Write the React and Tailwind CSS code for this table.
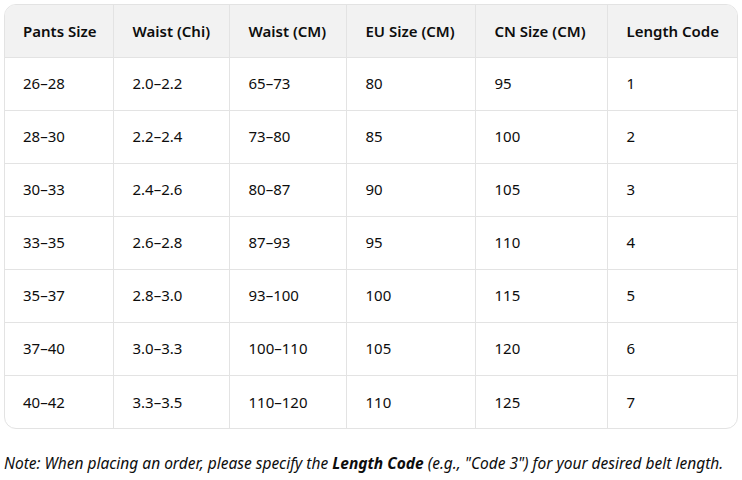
import React from "react";

const headers = ["Pants Size", "Waist (Chi)", "Waist (CM)", "EU Size (CM)", "CN Size (CM)", "Length Code"];
const rows = [
  ["26–28", "2.0–2.2", "65–73", "80", "95", "1"],
  ["28–30", "2.2–2.4", "73–80", "85", "100", "2"],
  ["30–33", "2.4–2.6", "80–87", "90", "105", "3"],
  ["33–35", "2.6–2.8", "87–93", "95", "110", "4"],
  ["35–37", "2.8–3.0", "93–100", "100", "115", "5"],
  ["37–40", "3.0–3.3", "100–110", "105", "120", "6"],
  ["40–42", "3.3–3.5", "110–120", "110", "125", "7"],
];
const widths = ["w-[108px]", "w-[116px]", "w-[117px]", "w-[129px]", "w-[132px]", "w-[130px]"];

export default function App() {
  return (
    <div className="bg-white p-1 text-[#0d0d0d] font-['Noto_Sans',sans-serif]" style={{ width: 742, height: 480 }}>
      <div className="w-[734px] border border-[#e3e3e3] rounded-xl overflow-hidden">
        <table className="w-full border-collapse table-fixed text-[15px]">
          <colgroup>
            {widths.map((w, i) => (
              <col key={i} className={w} />
            ))}
          </colgroup>
          <thead>
            <tr className="bg-[#f2f2f2]">
              {headers.map((h, i) => (
                <th
                  key={i}
                  className={`h-[52px] text-left font-semibold pr-2 border-b border-[#e3e3e3] ${i === 0 ? "pl-[18px]" : "pl-[19px]"} ${i < 5 ? "border-r" : ""}`}
                >
                  {h}
                </th>
              ))}
            </tr>
          </thead>
          <tbody>
            {rows.map((r, ri) => (
              <tr key={ri}>
                {r.map((c, ci) => (
                  <td
                    key={ci}
                    className={`h-[53px] pr-2 border-[#e3e3e3] ${ci === 0 ? "pl-[18px]" : "pl-[19px]"} ${ci < 5 ? "border-r" : ""} ${ri < rows.length - 1 ? "border-b" : ""}`}
                  >
                    {c}
                  </td>
                ))}
              </tr>
            ))}
          </tbody>
        </table>
      </div>
      <p className="mt-[22px] italic text-[15.5px] leading-6">
        Note: When placing an order, please specify the <strong className="font-bold">Length Code</strong> (e.g., "Code 3") for your desired belt length.
      </p>
    </div>
  );
}
